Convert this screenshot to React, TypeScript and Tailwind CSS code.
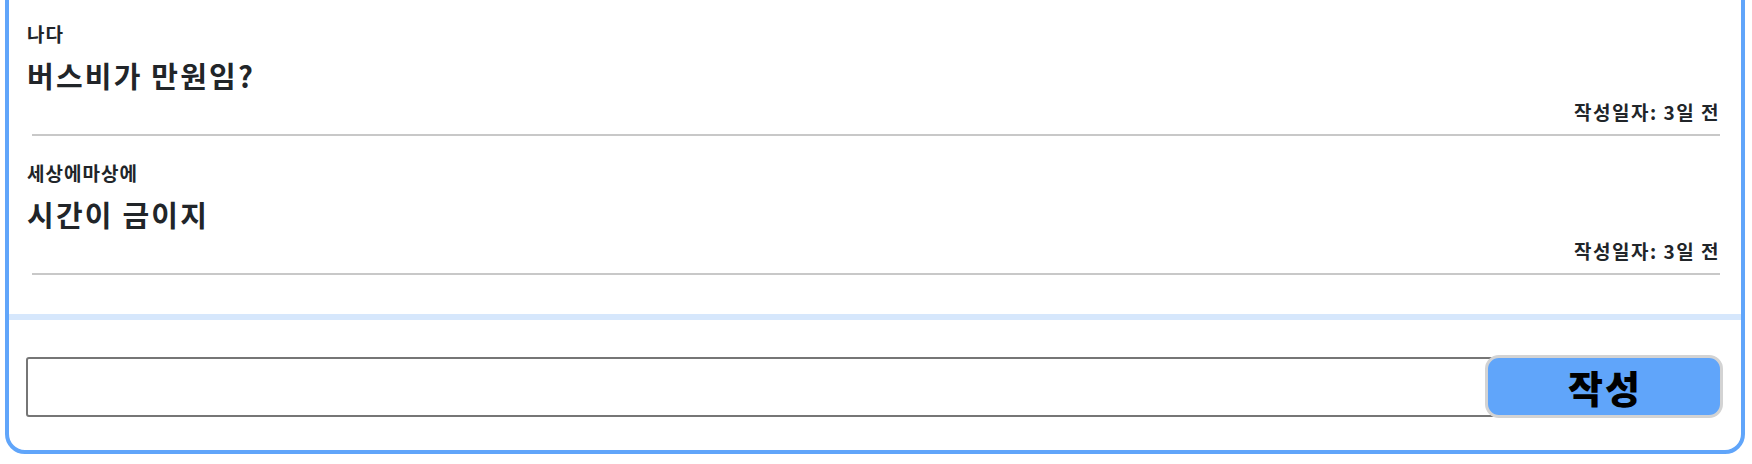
import { useState } from "react";

type Post = {
  author: string;
  title: string;
  createdAt: string;
};

const posts: Post[] = [
  { author: "나다", title: "버스비가 만원임?", createdAt: "3일 전" },
  { author: "세상에마상에", title: "시간이 금이지", createdAt: "3일 전" },
];

function PostItem({ post }: { post: Post }) {
  return (
    <li className="flex flex-col">
      <p className="text-[19px] leading-[24px] font-bold tracking-[1px] text-[#212529]">
        {post.author}
      </p>
      <h3 className="mt-[11px] text-[29px] leading-[36px] font-bold tracking-[2.2px] text-[#212529]">
        {post.title}
      </h3>
      <p className="mt-[7px] text-right text-[19px] leading-[24px] font-bold tracking-[1.5px] text-[#212529]">
        작성일자: {post.createdAt}
      </p>
      <div className="mt-[10px] ml-[5px] h-[2px] bg-[#c8c8c8]" />
    </li>
  );
}

export default function App() {
  const [comment, setComment] = useState("");

  return (
    <div
      className="h-[464px] w-[1752px] overflow-hidden bg-white"
      style={{ fontFamily: '"Noto Sans CJK KR", "Noto Sans", sans-serif' }}
    >
      <div className="-mt-[30px] ml-[5px] w-[1740px] rounded-[20px] border-4 border-[#60a5fa] bg-white">
        <ul className="flex flex-col gap-[25px] pt-[48px] pb-[39px] pl-[18px] pr-[21px]">
          {posts.map((post) => (
            <PostItem key={post.author} post={post} />
          ))}
        </ul>
        <div className="h-[6px] bg-[#d6e7fc]" />
        <form
          className="flex items-center pt-[35px] pb-[32px] pl-[17px] pr-[18px]"
          onSubmit={(e) => {
            e.preventDefault();
            setComment("");
          }}
        >
          <input
            className="h-[60px] min-w-0 flex-1 rounded-[3px] border-2 border-[#767676] bg-white px-3 text-[18px] outline-none"
            value={comment}
            onChange={(e) => setComment(e.target.value)}
          />
          <button
            type="submit"
            className="relative z-10 -ml-[10px] h-[63px] w-[238px] rounded-[14px] border-[3px] border-[#d3d3d3] bg-[#60a5fa] pl-[2px] text-[38px] leading-none font-black tracking-[2px] text-black"
          >
            작성
          </button>
        </form>
      </div>
    </div>
  );
}
